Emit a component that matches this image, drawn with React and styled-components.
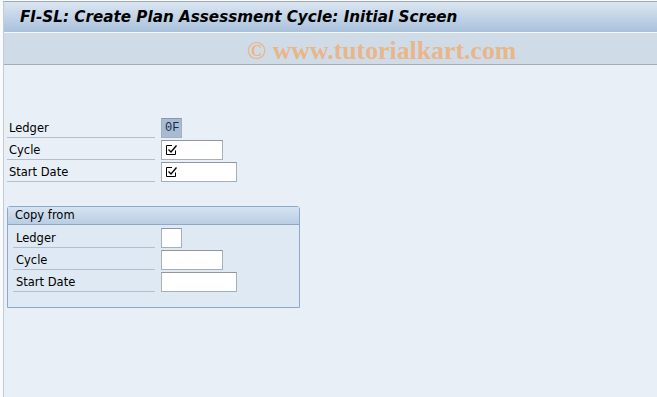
import React from 'react';
import styled, { createGlobalStyle } from 'styled-components';

const GlobalStyle = createGlobalStyle`
  html, body {
    margin: 0;
    padding: 0;
    background: #fafbfc;
  }
  body {
    font-family: "DejaVu Sans", Verdana, sans-serif;
  }
`;

const Frame = styled.div`
  margin: 1px 0 0 3px;
  height: 396px;
  border-left: 1px solid #c3cbd4;
  border-top: 1px solid #9ea8b6;
  display: flex;
  flex-direction: column;
  overflow: hidden;
`;

const TitleBar = styled.div`
  height: 30px;
  display: flex;
  align-items: center;
  padding-left: 16px;
  background: linear-gradient(#dbe6f1, #a9c1dc);
  color: #000;
  font: italic bold 15.2px "DejaVu Sans", Verdana, sans-serif;
  white-space: nowrap;
`;

const Toolbar = styled.div`
  height: 31px;
  border-top: 1px solid #f3f7fb;
  border-bottom: 1px solid #a3adba;
  background: #cfdce7;
  display: flex;
  align-items: center;
  padding-left: 243px;
`;

const Watermark = styled.span`
  font: bold 25.8px "Liberation Serif", "Times New Roman", serif;
  color: #e9b68a;
  margin-top: 4px;
  white-space: nowrap;
`;

const Body = styled.div`
  flex: 1;
  background: #e8eff7;
  padding: 51px 0 0 3px;
`;

const Rows = styled.div`
  display: flex;
  flex-direction: column;
`;

const Row = styled.div`
  display: flex;
  align-items: flex-end;
  height: 22px;
`;

const Label = styled.div`
  box-sizing: border-box;
  width: ${p => p.$width}px;
  height: 22px;
  padding: 2px 0 0 ${p => p.$pad}px;
  border-bottom: 1px solid #b3bfcc;
  font-size: 11.5px;
  line-height: 20px;
  color: #000;
`;

const Field = styled.div`
  box-sizing: border-box;
  width: ${p => p.$width}px;
  height: 20px;
  margin-left: 6px;
  border: 1px solid #a7afb9;
  border-top-color: #8e969f;
  background: ${p => (p.$filled ? '#a6bcd6' : '#fff')};
  display: flex;
  align-items: center;
  padding-left: 3px;
  font: 12px "Liberation Mono", "Courier New", monospace;
  color: #1a2a44;
`;

const Group = styled.div`
  box-sizing: border-box;
  width: 293px;
  margin: 24px 0 0 0;
  border: 1px solid #8ea8c7;
  border-radius: 3px 3px 0 0;
  background: #dfe9f3;
  padding-bottom: 15px;
`;

const GroupHeader = styled.div`
  height: 17px;
  border-bottom: 1px solid #8ea8c7;
  background: linear-gradient(#d6e4f1, #b9cde3);
  padding-left: 7px;
  font-size: 11.5px;
  line-height: 17px;
  color: #000;
  margin-bottom: 1px;
`;

const GroupRows = styled(Rows)`
  padding-left: 5px;
`;

const Required = () => (
  <svg width="13" height="12" viewBox="0 0 13 12">
    <path d="M1.5 1.5 H7 M1.5 1.5 V10.5 H10.5 V6.5" fill="none" stroke="#000" strokeWidth="1" />
    <path d="M3.5 5.5 L6 8 L11.5 1.5" fill="none" stroke="#000" strokeWidth="1.3" />
  </svg>
);

const mainRows = [
  { label: 'Ledger', width: 21, value: '0F', filled: true },
  { label: 'Cycle', width: 62, required: true },
  { label: 'Start Date', width: 76, required: true },
];

const copyRows = [
  { label: 'Ledger', width: 21 },
  { label: 'Cycle', width: 62 },
  { label: 'Start Date', width: 76 },
];

const App = () => {
  return (
    <>
      <GlobalStyle />
      <Frame>
        <TitleBar>FI-SL: Create Plan Assessment Cycle: Initial Screen</TitleBar>
        <Toolbar>
          <Watermark>© www.tutorialkart.com</Watermark>
        </Toolbar>
        <Body>
          <Rows>
            {mainRows.map(r => (
              <Row key={r.label}>
                <Label $width={148} $pad={2}>{r.label}</Label>
                <Field $width={r.width} $filled={r.filled}>
                  {r.value}
                  {r.required && <Required />}
                </Field>
              </Row>
            ))}
          </Rows>
          <Group>
            <GroupHeader>Copy from</GroupHeader>
            <GroupRows>
              {copyRows.map(r => (
                <Row key={r.label}>
                  <Label $width={142} $pad={3}>{r.label}</Label>
                  <Field $width={r.width} />
                </Row>
              ))}
            </GroupRows>
          </Group>
        </Body>
      </Frame>
    </>
  );
};

export default App;
